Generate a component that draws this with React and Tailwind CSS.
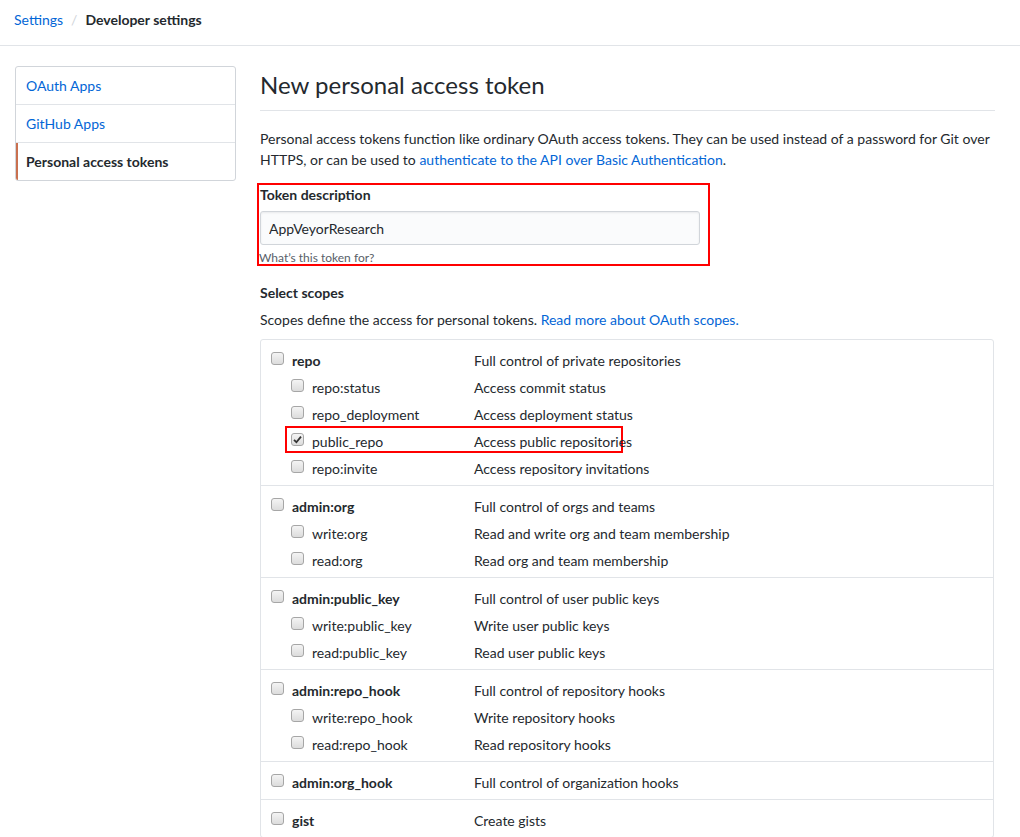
import { useState } from "react";

const groups = [
  {
    name: "repo",
    desc: "Full control of private repositories",
    children: [
      { name: "repo:status", desc: "Access commit status" },
      { name: "repo_deployment", desc: "Access deployment status" },
      { name: "public_repo", desc: "Access public repositories", checked: true, marked: true },
      { name: "repo:invite", desc: "Access repository invitations" },
    ],
  },
  {
    name: "admin:org",
    desc: "Full control of orgs and teams",
    children: [
      { name: "write:org", desc: "Read and write org and team membership" },
      { name: "read:org", desc: "Read org and team membership" },
    ],
  },
  {
    name: "admin:public_key",
    desc: "Full control of user public keys",
    children: [
      { name: "write:public_key", desc: "Write user public keys" },
      { name: "read:public_key", desc: "Read user public keys" },
    ],
  },
  {
    name: "admin:repo_hook",
    desc: "Full control of repository hooks",
    children: [
      { name: "write:repo_hook", desc: "Write repository hooks" },
      { name: "read:repo_hook", desc: "Read repository hooks" },
    ],
  },
  { name: "admin:org_hook", desc: "Full control of organization hooks", children: [] },
  { name: "gist", desc: "Create gists", children: [] },
];

const Checkbox = ({ checked }) => (
  <span className="w-[13px] h-[13px] shrink-0 rounded-[3px] border border-[#a6a6a6] bg-gradient-to-b from-[#f4f4f4] to-[#dcdcdc] flex items-center justify-center">
    {checked && (
      <svg width="9" height="9" viewBox="0 0 9 9">
        <path d="M1 4.8 L3.4 7.2 L8 1.6" stroke="#333" strokeWidth="1.8" fill="none" />
      </svg>
    )}
  </span>
);

const Row = ({ item, child }) => (
  <div className="relative flex items-center h-[27px]">
    {/* red annotation box */}
    {item.marked && (
      <div className="absolute left-[24px] top-[0px] w-[338px] h-[27px] border-2 border-[#ff0000]" />
    )}
    <div className={`flex items-center w-[213px] shrink-0 ${child ? "pl-[30px]" : "pl-[10px]"}`}>
      <Checkbox checked={item.checked} />
      <span className={`ml-[8px] relative top-[2px] ${child ? "" : "font-bold"}`}>{item.name}</span>
    </div>
    <span className="relative top-[2px]">{item.desc}</span>
  </div>
);

export default function App() {
  const [desc, setDesc] = useState("AppVeyorResearch");

  return (
    <div
      className="w-[1020px] min-h-[837px] bg-white text-[#24292e] text-[14px] overflow-hidden"
      style={{ fontFamily: 'Lato, "Liberation Sans", Arial, sans-serif' }}
    >
      {/* Breadcrumb */}
      <div className="h-[46px] border-b border-[#e1e4e8] flex items-center px-[14px] pb-[7px]">
        <a className="text-[#0366d6]">Settings</a>
        <span className="text-[#d1d5da] mx-[8px]">/</span>
        <span className="font-bold">Developer settings</span>
      </div>

      <div className="flex pt-[20px]">
        {/* Sidebar */}
        <div className="ml-[15px] w-[221px] shrink-0">
          <nav className="border border-[#d1d5da] rounded-[3px] overflow-hidden">
            <a className="flex items-center h-[38px] px-[10px] text-[#0366d6] border-b border-[#e1e4e8]">
              OAuth Apps
            </a>
            <a className="flex items-center h-[38px] px-[10px] text-[#0366d6] border-b border-[#e1e4e8]">
              GitHub Apps
            </a>
            <a className="flex items-center h-[37px] px-[8px] font-bold border-l-2 border-[#c9704f]">
              Personal access tokens
            </a>
          </nav>
        </div>

        {/* Main */}
        <div className="ml-[24px] w-[735px]">
          <h1 className="text-[24px] leading-[30px] pb-[10px] border-b border-[#e1e4e8] pt-[4px]">
            New personal access token
          </h1>

          <p className="mt-[17px] leading-[21px]">
            Personal access tokens function like ordinary OAuth access tokens. They can be used
            instead of a password for Git over HTTPS, or can be used to{" "}
            <a className="text-[#0366d6]">authenticate to the API over Basic Authentication</a>.
          </p>

          {/* Token description */}
          <div className="mt-[13px] -ml-[3px] w-[453px] h-[83px] border-2 border-[#ff0000] pl-[1px] pt-[0px]">
            <label className="block font-bold leading-[20px]">Token description</label>
            <input
              value={desc}
              onChange={(e) => setDesc(e.target.value)}
              className="mt-[6px] w-[440px] h-[34px] px-[8px] bg-[#fafbfc] border border-[#d1d5da] rounded-[3px] shadow-[inset_0_1px_2px_rgba(27,31,35,0.075)] outline-none"
            />
            <p className="text-[12px] leading-[16px] text-[#586069] mt-[5px] -ml-[1px]">
              What’s this token for?
            </p>
          </div>

          <h3 className="font-bold mt-[17px] leading-[20px]">Select scopes</h3>
          <p className="mt-[7px] leading-[20px]">
            Scopes define the access for personal tokens.{" "}
            <a className="text-[#0366d6]">Read more about OAuth scopes.</a>
          </p>

          {/* Scopes */}
          <div className="mt-[9px] border border-[#e1e4e8] rounded-[3px] w-[734px]">
            {groups.map((g, i) => (
              <div
                key={g.name}
                className={`py-[5px] ${i > 0 ? "border-t border-[#e1e4e8]" : ""}`}
              >
                <Row item={g} />
                {g.children.map((c) => (
                  <Row key={c.name} item={c} child />
                ))}
              </div>
            ))}
          </div>
        </div>
      </div>
    </div>
  );
}
